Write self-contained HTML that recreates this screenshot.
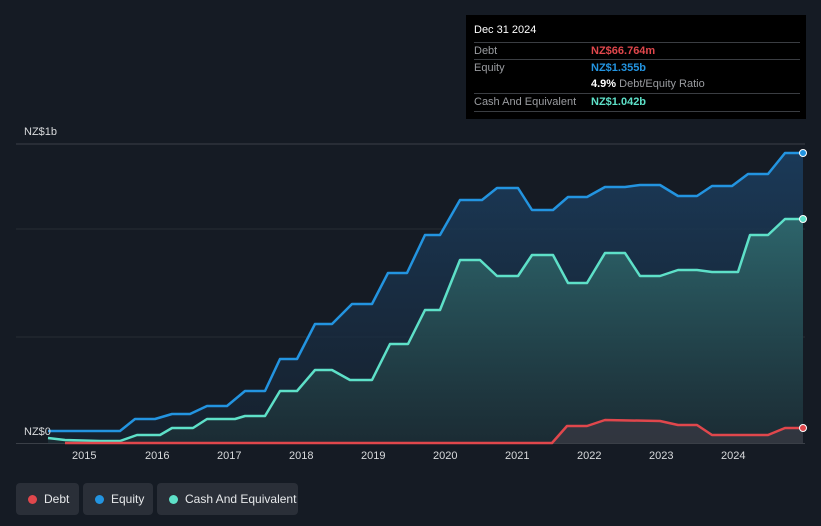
<!DOCTYPE html>
<html><head><style>
body{margin:0;background:#151b24;font-family:"Liberation Sans",sans-serif;}
#w{position:relative;width:821px;height:526px;overflow:hidden;background:#151b24;}
.tip{position:absolute;left:466px;top:15px;width:340px;height:104px;background:#000;color:#fff;font-size:11px;}
.tip .r{position:absolute;left:8px;width:326px;border-top:1px solid #3a3d42;height:17px;line-height:17px;}
.tip .l{color:#9a9ca0;}
.tip .v{position:absolute;left:117px;top:0;font-weight:bold;}
.leg{position:absolute;top:483px;height:32px;background:#2a2f38;border-radius:4px;color:#e6e8ea;font-size:12px;line-height:32px;}
.leg i{position:absolute;top:12px;left:12px;width:9px;height:9px;border-radius:50%;}
.leg span{position:absolute;left:28px;}
.ax{position:absolute;top:450px;color:#d8dadc;font-size:11px;}
</style></head><body><div id="w">
<svg width="821" height="526" style="position:absolute;left:0;top:0">
<defs>
<linearGradient id="g1" x1="0" y1="0" x2="0" y2="1"><stop offset="0" stop-color="#1b3d5e" stop-opacity=".9"/><stop offset="1" stop-color="#172535" stop-opacity=".6"/></linearGradient>
<linearGradient id="g2" x1="0" y1="0" x2="0" y2="1"><stop offset="0" stop-color="#2f6a6e" stop-opacity=".9"/><stop offset="1" stop-color="#1d3036" stop-opacity=".7"/></linearGradient>
</defs>
<line x1="16" y1="144" x2="805" y2="144" stroke="#3a3f47"/>
<line x1="16" y1="229" x2="805" y2="229" stroke="#262c35"/>
<line x1="16" y1="337" x2="805" y2="337" stroke="#262c35"/>
<line x1="16" y1="443.5" x2="805" y2="443.5" stroke="#3a3f47"/>
<polygon fill="url(#g1)" points="48,431 120,431 135,419 155,419 172,414 190,414 207,406 227,406 245,391 265,391 280,359 297,359 315,324 332,324 352,304 372,304 388,273 407,273 425,235 440,235 460,200 482,200 497,188 518,188 532,210 553,210 568,197 587,197 605,187 625,187 640,185 660,185 678,196 697,196 712,186 732,186 748,174 768,174 785,153 803,153 803,443 48,443"/>
<polygon fill="url(#g2)" points="48,438 65,440 100,441 120,441 137,435 160,435 172,428 193,428 207,419 235,419 245,416 265,416 280,391 297,391 315,370 332,370 350,380 372,380 390,344 408,344 425,310 440,310 460,260 480,260 497,276 518,276 532,255 553,255 568,283 587,283 605,253 625,253 640,276 660,276 678,270 697,270 712,272 738,272 750,235 768,235 785,219 803,219 803,443 48,443"/>
<polygon fill="#3a3a44" opacity=".7" points="552,443 567,426 587,426 605,420 660,421 678,425 697,425 712,435 768,435 785,428 803,428 803,443"/>
<g fill="none" stroke-width="2.5" stroke-linejoin="round">
<polyline stroke="#2394e0" points="48,431 120,431 135,419 155,419 172,414 190,414 207,406 227,406 245,391 265,391 280,359 297,359 315,324 332,324 352,304 372,304 388,273 407,273 425,235 440,235 460,200 482,200 497,188 518,188 532,210 553,210 568,197 587,197 605,187 625,187 640,185 660,185 678,196 697,196 712,186 732,186 748,174 768,174 785,153 803,153"/>
<polyline stroke="#5ee0c8" points="48,438 65,440 100,441 120,441 137,435 160,435 172,428 193,428 207,419 235,419 245,416 265,416 280,391 297,391 315,370 332,370 350,380 372,380 390,344 408,344 425,310 440,310 460,260 480,260 497,276 518,276 532,255 553,255 568,283 587,283 605,253 625,253 640,276 660,276 678,270 697,270 712,272 738,272 750,235 768,235 785,219 803,219"/>
<polyline stroke="#e0474c" points="65,443 552,443 567,426 587,426 605,420 660,421 678,425 697,425 712,435 768,435 785,428 803,428"/>
</g>
<circle cx="803" cy="153" r="3.5" fill="#2394e0" stroke="#fff"/>
<circle cx="803" cy="219" r="3.5" fill="#5ee0c8" stroke="#fff"/>
<circle cx="803" cy="428" r="3.5" fill="#e0474c" stroke="#fff"/>
<text x="24" y="135" fill="#d8dadc" font-size="11" font-family="Liberation Sans">NZ$1b</text>
<text x="24" y="435" fill="#d8dadc" font-size="11" font-family="Liberation Sans">NZ$0</text>
</svg>
<div class="ax" style="left:72px">2015</div><div class="ax" style="left:145px">2016</div><div class="ax" style="left:217px">2017</div><div class="ax" style="left:289px">2018</div><div class="ax" style="left:361px">2019</div><div class="ax" style="left:433px">2020</div><div class="ax" style="left:505px">2021</div><div class="ax" style="left:577px">2022</div><div class="ax" style="left:649px">2023</div><div class="ax" style="left:721px">2024</div>
<div class="tip">
<div style="position:absolute;left:8px;top:9px;font-size:11px">Dec 31 2024</div>
<div class="r" style="top:27px"><span class="l">Debt</span><span class="v" style="color:#e0474c">NZ$66.764m</span></div>
<div class="r" style="top:44px"><span class="l">Equity</span><span class="v" style="color:#2394e0">NZ$1.355b</span></div>
<div class="r" style="top:61px;border-top:none"><span class="v">4.9% <span style="color:#9a9ca0;font-weight:normal">Debt/Equity Ratio</span></span></div>
<div class="r" style="top:78px;border-bottom:1px solid #3a3d42"><span class="l">Cash And Equivalent</span><span class="v" style="color:#5ee0c8">NZ$1.042b</span></div>
</div>
<div class="leg" style="left:16px;width:63px"><i style="background:#e0474c"></i><span>Debt</span></div>
<div class="leg" style="left:83px;width:70px"><i style="background:#2394e0"></i><span>Equity</span></div>
<div class="leg" style="left:157px;width:141px"><i style="background:#5ee0c8"></i><span>Cash And Equivalent</span></div>
</div></body></html>
